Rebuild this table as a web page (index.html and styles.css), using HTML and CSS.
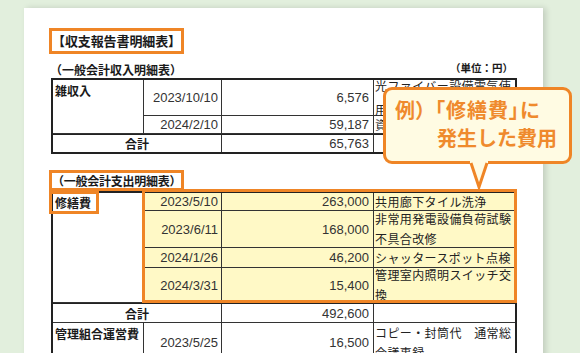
FILE: index.html
```html
<!DOCTYPE html>
<html lang="ja">
<head>
<meta charset="utf-8">
<title>収支報告書明細表</title>
<link rel="stylesheet" href="styles.css">
</head>
<body>
<div class="stage">
  <div class="paper">
    <h1 class="doc-title">【収支報告書明細表】</h1>

    <div class="sec-head">
      <h2 class="sec-title">（一般会計収入明細表）</h2>
      <span class="unit">（単位：円）</span>
    </div>
    <div class="ledger ledger-income">
      <div class="cell lbl rs2">雑収入</div>
      <div class="cell date">2023/10/10</div>
      <div class="cell amt">6,576</div>
      <div class="cell desc loose">光ファイバー設備電気使用料</div>
      <div class="cell date">2024/2/10</div>
      <div class="cell amt">59,187</div>
      <div class="cell desc">資源回収報奨金</div>
      <div class="cell total tot last">合計</div>
      <div class="cell amt tot last">65,763</div>
      <div class="cell desc tot last"></div>
    </div>

    <h2 class="sec-title boxed">（一般会計支出明細表）</h2>
    <div class="ledger ledger-expense">
      <div class="cell lbl flush rs4"><span class="mark">修繕費</span></div>
      <div class="cell date hl">2023/5/10</div>
      <div class="cell amt hl">263,000</div>
      <div class="cell desc hl">共用廊下タイル洗浄</div>
      <div class="cell date hl">2023/6/11</div>
      <div class="cell amt hl">168,000</div>
      <div class="cell desc hl">非常用発電設備負荷試験不具合改修</div>
      <div class="cell date hl">2024/1/26</div>
      <div class="cell amt hl">46,200</div>
      <div class="cell desc hl">シャッタースポット点検</div>
      <div class="cell date hl">2024/3/31</div>
      <div class="cell amt hl">15,400</div>
      <div class="cell desc hl">管理室内照明スイッチ交換</div>
      <div class="cell total tot">合計</div>
      <div class="cell amt tot">492,600</div>
      <div class="cell desc tot"></div>
      <div class="cell lbl">管理組合運営費</div>
      <div class="cell date">2023/5/25</div>
      <div class="cell amt">16,500</div>
      <div class="cell desc">コピー・封筒代　通常総会議事録</div>
      <div class="hl-frame"></div>
    </div>
  </div>

  <div class="callout">
    <span class="callout-line first">例）<span class="tight">「修繕費」に</span></span>
    <span class="callout-line second">発生した費用</span>
    <svg class="callout-tail" width="26" height="32" viewBox="0 0 26 32">
      <polygon points="4,0 22,0 22,4 13,27 4,4" fill="#fffbe3"/>
      <polyline points="5,4 13,28 21,4" fill="none" stroke="#ef8526" stroke-width="3" stroke-linejoin="miter"/>
    </svg>
  </div>
</div>
</body>
</html>
```

FILE: styles.css
```css
* { box-sizing: border-box; }
html, body { margin: 0; padding: 0; }
body {
  width: 580px;
  height: 353px;
  overflow: hidden;
  background: #e2efdd;
  font-family: "Noto Sans CJK JP", "Noto Sans", sans-serif;
  color: #1a1a1a;
}
.stage {
  position: relative;
  width: 580px;
  height: 353px;
  padding: 8px 0 0 24px;
}
.paper {
  width: 519px;
  height: 370px;
  background: #fff;
  box-shadow: 3px 0 6px rgba(0, 0, 0, 0.14);
  padding: 19px 0 0 25px;
}
.doc-title {
  display: inline-block;
  margin: 0;
  font-size: 13px;
  font-weight: 700;
  line-height: 20px;
  border: 3px solid #ef8526;
  letter-spacing: -0.1px;
}
.sec-head {
  display: flex;
  justify-content: space-between;
  align-items: flex-end;
  width: 468px;
  height: 17px;
  margin-top: 7px;
}
.sec-title {
  margin: 0;
  font-size: 12px;
  font-weight: 700;
  line-height: 17px;
  padding-left: 1px;
}
.sec-title.boxed {
  display: block;
  width: fit-content;
  margin-top: 16px;
  padding: 0;
  line-height: 15px;
  letter-spacing: -0.25px;
  border: 3px solid #ef8526;
}
.unit {
  font-size: 10.5px;
  font-weight: 700;
  line-height: 14px;
  margin: 0 4px 3px 0;
}
.ledger {
  position: relative;
  display: grid;
  grid-template-columns: 91px 78px 152px 1fr;
  width: 466px;
  margin-left: 2px;
  border: 2px solid #222;
}
.ledger-income { grid-template-rows: 36px 18px 18px; }
.ledger-expense { grid-template-rows: 18px 37px 20px 35px 20px 40px; }

.cell {
  display: flex;
  align-items: center;
  min-width: 0;
  font-size: 12px;
  border-right: 1px solid #333;
  border-bottom: 1px solid #333;
}
.lbl {
  align-items: flex-start;
  font-weight: 700;
  line-height: 17px;
  padding: 2px 0 0 2px;
}
.lbl.flush { padding: 0; }
.mark {
  display: block;
  width: 50px;
  height: 23px;
  margin: -2px 0 0 -4px;
  padding-left: 3px;
  line-height: 17px;
  border: 3px solid #ef8526;
}
.date, .amt {
  justify-content: flex-end;
  font-family: "Liberation Sans", Arial, sans-serif;
  font-size: 13px;
  color: #333;
}
.date { padding-right: 3px; }
.amt { padding-right: 4px; }
.desc {
  border-right: 0;
  padding-left: 1px;
  line-height: 20px;
  letter-spacing: 0.4px;
  color: #222;
}
.desc.loose { line-height: 24px; }
.total {
  grid-column: span 2;
  justify-content: center;
  font-weight: 700;
}
.tot { border-top: 1px solid #222; }
.last { border-bottom: 0; }
.rs2 { grid-row: span 2; }
.rs4 { grid-row: span 4; }
.hl { background: #fff9c6; }
.hl-frame {
  position: absolute;
  grid-row: 1 / 5;
  grid-column: 2 / 5;
  top: -4px;
  left: -2px;
  right: -2px;
  bottom: 0;
  border: 3px solid #ef8526;
}

.callout {
  position: absolute;
  left: 383px;
  top: 87px;
  width: 189px;
  height: 77px;
  padding: 6px 0 0 9px;
  background: #fffbe3;
  border: 3px solid #ef8526;
  border-radius: 9px;
  color: #ef8a2d;
  font-size: 20px;
  font-weight: 700;
  line-height: 28px;
}
.callout-line {
  display: block;
  white-space: nowrap;
}
.tight {
  font-feature-settings: "palt";
  letter-spacing: 1px;
}
.callout-line.second { padding-left: 42px; }
.callout-tail {
  position: absolute;
  left: 80px;
  top: 69px;
}
```
